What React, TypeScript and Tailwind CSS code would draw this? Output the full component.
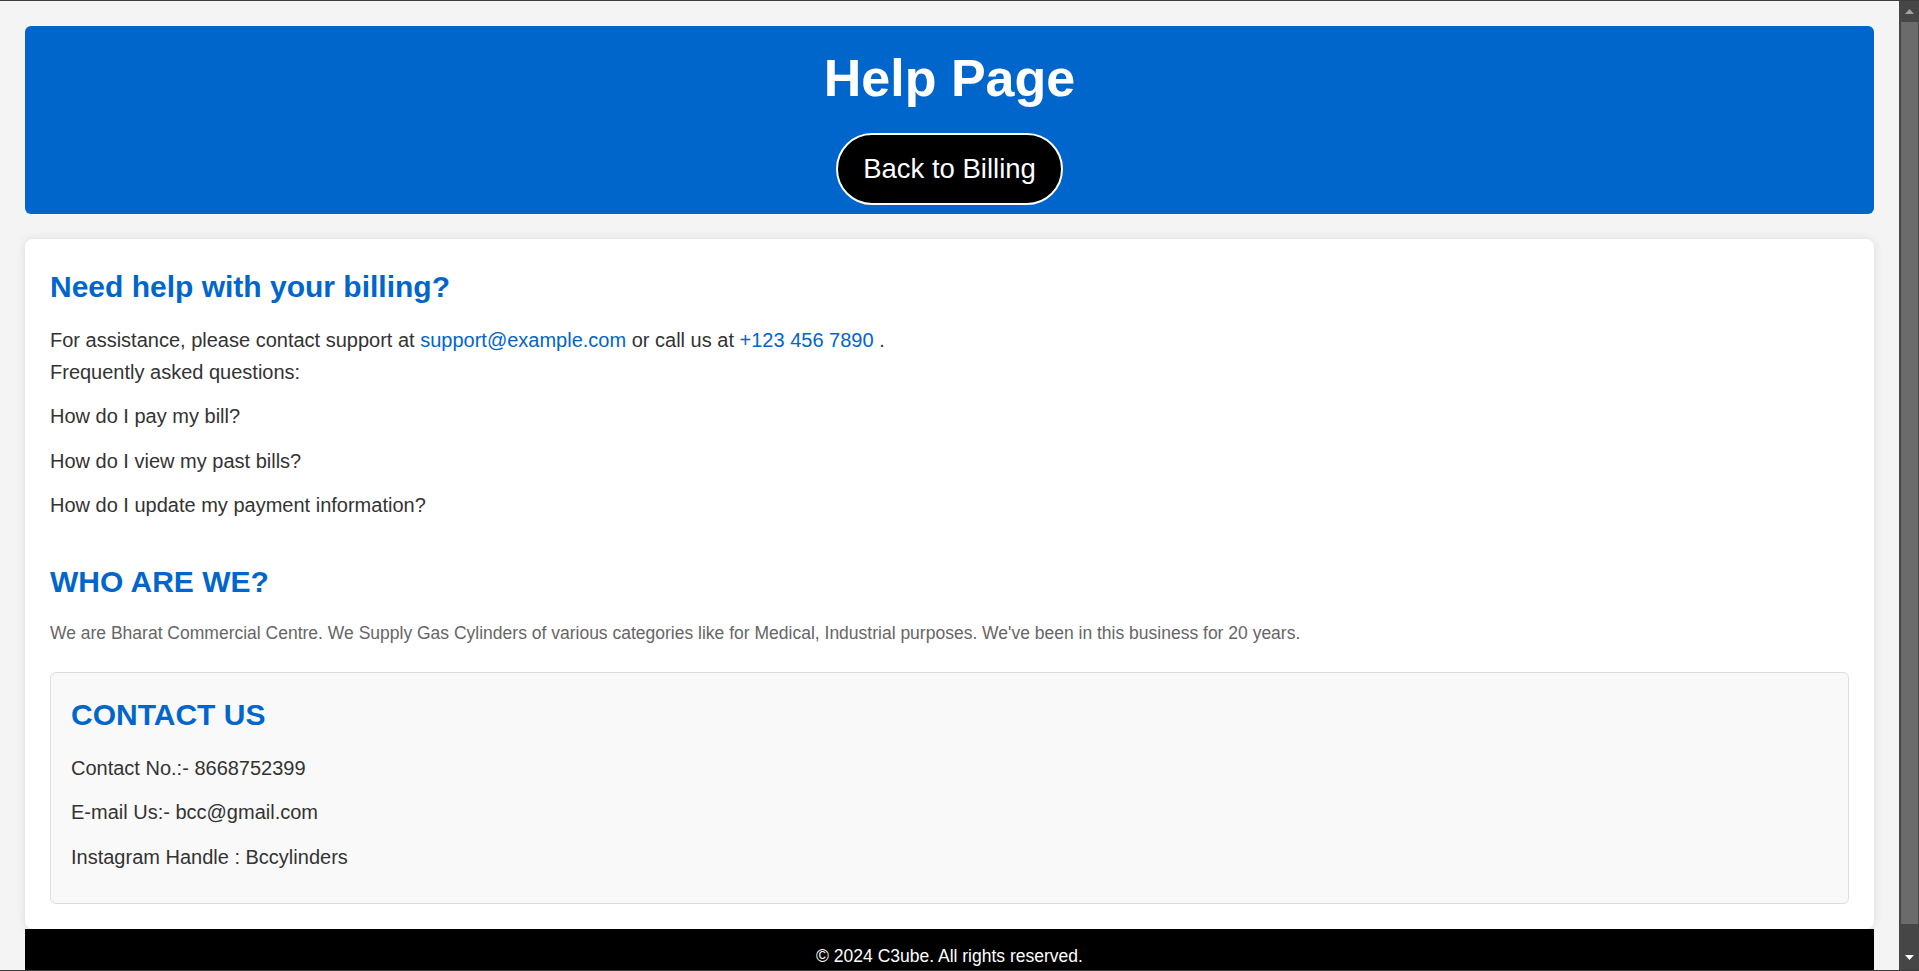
import React from "react";

function FakeScrollbar() {
  return (
    <div aria-hidden="true" className="fixed top-0 right-0 bottom-0 w-[20px] bg-[#464646] border-t border-[#3c3c3c] flex flex-col items-center">
      <div className="h-[21px] w-full flex items-center justify-center">
        <svg width="9" height="5" viewBox="0 0 9 5"><polygon points="4.5,0 9,5 0,5" fill="#a3a3a3" /></svg>
      </div>
      <div className="flex-1 w-full pl-[2px] pr-[1px] pb-[25px]">
        <div className="h-full w-full bg-[#6b6b6b]" />
      </div>
      <div className="h-[22px] w-full flex items-start justify-center pt-[6px]">
        <svg width="9" height="5" viewBox="0 0 9 5"><polygon points="0,0 9,0 4.5,5" fill="#ffffff" /></svg>
      </div>
    </div>
  );
}

export default function App() {
  return (
    <div className="min-h-screen bg-[#f4f4f4] border-t border-[#3c3c3c] pl-[25px] pr-[45px] pt-[25px] pb-[53px] font-['Liberation_Sans',Arial,sans-serif] text-[#333]">
      <header className="bg-[#0066cc] rounded-[6px] pt-[22px] pb-[9px] flex flex-col items-center text-white">
        <h1 className="text-[52px] font-bold leading-[60px] mb-[25px]">Help Page</h1>
        <button className="bg-black text-white text-[27.5px] leading-[32px] px-[25px] py-[18px] rounded-full border-2 border-white">
          Back to Billing
        </button>
      </header>

      <main className="mt-[25px] bg-white rounded-[8px] shadow-[0_0_10px_rgba(0,0,0,0.1)] px-[25px] pt-[24px] pb-[25px]">
        <section>
          <h2 className="text-[30px] font-bold leading-[48px] text-[#0066cc] mb-[12.5px]">
            Need help with your billing?
          </h2>
          <p className="text-[20px] leading-[32px]">
            For assistance, please contact support at{" "}
            <a href="#" className="text-[#0066cc]">support@example.com</a> or call us at{" "}
            <a href="#" className="text-[#0066cc]">+123 456 7890</a> .
          </p>
          <p className="text-[20px] leading-[32px]">Frequently asked questions:</p>
          <div className="flex flex-col gap-[12.5px] mt-[12.5px]">
            <p className="text-[20px] leading-[32px]">How do I pay my bill?</p>
            <p className="text-[20px] leading-[32px]">How do I view my past bills?</p>
            <p className="text-[20px] leading-[32px]">How do I update my payment information?</p>
          </div>
        </section>

        <section className="mt-[37px]">
          <h2 className="text-[30px] font-bold leading-[48px] text-[#0066cc] mb-[12.5px]">WHO ARE WE?</h2>
          <p className="text-[17.5px] leading-[28px] text-[#666]">
            We are Bharat Commercial Centre. We Supply Gas Cylinders of various categories like for Medical, Industrial purposes. We've been in this business for 20 years.
          </p>
        </section>

        <section className="mt-[25px] bg-[#f9f9f9] border border-[#dddddd] rounded-[6px] px-[20px] pt-[18px] pb-[18px]">
          <h2 className="text-[30px] font-bold leading-[48px] text-[#0066cc] mb-[13px]">CONTACT US</h2>
          <div className="flex flex-col gap-[12.5px] mb-[12.5px]">
            <p className="text-[20px] leading-[32px]">Contact No.:- 8668752399</p>
            <p className="text-[20px] leading-[32px]">E-mail Us:- bcc@gmail.com</p>
            <p className="text-[20px] leading-[32px]">Instagram Handle : Bccylinders</p>
          </div>
        </section>
      </main>

      <footer className="bg-black text-white text-center text-[17.5px] leading-[28px] pt-[13px] pb-[12px]">
        © 2024 C3ube. All rights reserved.
      </footer>

      <FakeScrollbar />
      <div aria-hidden="true" className="fixed left-0 right-0 bottom-0 h-px bg-[#3c3c3c]" />
    </div>
  );
}
